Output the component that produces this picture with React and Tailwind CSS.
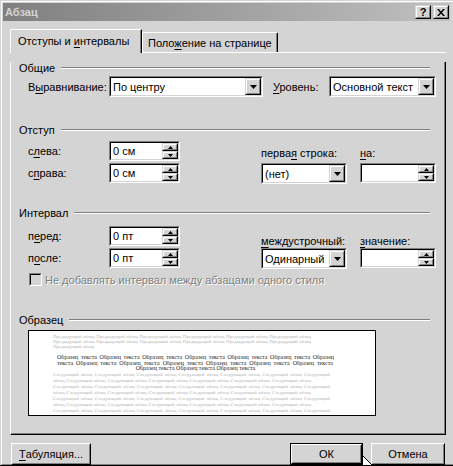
import React from "react";

const FONT = "font-[family-name:'Liberation_Sans',Arial,sans-serif]";

function U({ children }) {
  return <span className="underline decoration-1 underline-offset-[2px]">{children}</span>;
}

function Sunken({ className = "", inner = "bg-white", children }) {
  return (
    <div className={`border border-t-[#808080] border-l-[#808080] border-b-white border-r-white ${className}`}>
      <div className={`h-full w-full border border-t-black border-l-black border-b-[#d4d4d4] border-r-[#d4d4d4] flex items-center ${inner}`}>
        {children}
      </div>
    </div>
  );
}

function Bevel({ className = "", children }) {
  return (
    <div className={`border border-t-[#d4d4d4] border-l-[#d4d4d4] border-b-black border-r-black bg-[#d4d4d4] ${className}`}>
      <div className="h-full w-full border border-t-white border-l-white border-b-[#808080] border-r-[#808080] flex items-center justify-center">
        {children}
      </div>
    </div>
  );
}

function Combo({ w, value, className = "" }) {
  return (
    <Sunken className={`h-[21px] ${w} ${className}`}>
      <span className="flex-1 pl-[2px] whitespace-nowrap overflow-hidden leading-[14px]">{value}</span>
      <Bevel className="w-[16px] h-full shrink-0">
        <svg width="7" height="4" viewBox="0 0 7 4">
          <path d="M0 0h7L3.5 4z" fill="#000" />
        </svg>
      </Bevel>
    </Sunken>
  );
}

function Spin({ w, value, className = "" }) {
  return (
    <Sunken className={`h-[20px] ${w} ${className}`}>
      <span className="flex-1 pl-[2px] whitespace-nowrap overflow-hidden leading-[14px]">{value}</span>
      <div className="w-[16px] h-full flex flex-col shrink-0">
        <Bevel className="h-1/2 w-full">
          <svg width="5" height="3" viewBox="0 0 5 3">
            <path d="M2.5 0L5 3H0z" fill="#000" />
          </svg>
        </Bevel>
        <Bevel className="h-1/2 w-full">
          <svg width="5" height="3" viewBox="0 0 5 3">
            <path d="M0 0h5L2.5 3z" fill="#000" />
          </svg>
        </Bevel>
      </div>
    </Sunken>
  );
}

function Header({ label, className = "" }) {
  return (
    <div className={`flex items-center h-[12px] w-[411px] ${className}`}>
      <span className="leading-[12px] whitespace-nowrap">{label}</span>
      <div className="flex-1 ml-[6px] h-[2px] border-t border-t-[#808080] border-b border-b-white" />
    </div>
  );
}

function Row({ label, value }) {
  return (
    <div className="flex items-center h-[20px]">
      <span className="ml-[9px] w-[81px] whitespace-nowrap">{label}</span>
      <Spin w="w-[71px]" value={value} />
    </div>
  );
}

function PushButton({ className = "", children }) {
  return (
    <div className={`h-[22px] border border-t-white border-l-white border-b-black border-r-black ${className}`}>
      <div className="h-full w-full border border-t-[#d4d4d4] border-l-[#d4d4d4] border-b-[#808080] border-r-[#808080] flex items-center justify-center whitespace-nowrap">
        {children}
      </div>
    </div>
  );
}

const PREV = Array(6).fill("Предыдущий абзац").join(" ");
const DARK1 = Array(6).fill("Образец текста").join(" ") + " Образец";
const DARK2 = "текста " + Array(6).fill("Образец текста").join(" ");
const DARK3 = Array(3).fill("Образец текста").join(" ");
const NEXTA = Array(6).fill("Следующий абзац").join(" ") + " Следующий";
const NEXTB = "абзац " + Array(6).fill("Следующий абзац").join(" ");

const J = "text-justify [text-align-last:justify] overflow-hidden";

function Preview() {
  return (
    <div className="mt-[4px] ml-[9px] w-[348px] h-[86px] border border-black bg-white overflow-hidden font-[family-name:'Liberation_Serif',serif]">
      <div className="ml-[24px] pt-[3px] text-[5px] leading-[5px] text-[#b4b4b4]">
        <div className={`w-[258px] h-[5px] ${J}`}>{PREV}</div>
        <div className={`w-[258px] h-[5px] ${J}`}>{PREV}</div>
        <div className="h-[5px] whitespace-nowrap">Предыдущий абзац</div>
      </div>
      <div className="mt-[6px] ml-[28px] text-[6px] leading-[5.7px] text-[#2a2a2a]">
        <div className={`w-[277px] h-[5.7px] ${J}`}>{DARK1}</div>
        <div className={`w-[276px] h-[5.7px] ${J}`}>{DARK2}</div>
        <div className="w-[277px] h-[5.7px] text-center whitespace-nowrap">{DARK3}</div>
      </div>
      <div className="ml-[24px] text-[5px] leading-[6px] text-[#b4b4b4]">
        <div className={`w-[277px] h-[6px] ${J}`}>{NEXTA}</div>
        <div className={`w-[258px] h-[6px] ${J}`}>{NEXTB}</div>
        <div className={`w-[277px] h-[6px] ${J}`}>{NEXTA}</div>
        <div className={`w-[258px] h-[6px] ${J}`}>{NEXTB}</div>
        <div className={`w-[277px] h-[6px] ${J}`}>{NEXTA}</div>
        <div className={`w-[258px] h-[6px] ${J}`}>{NEXTB}</div>
        <div className={`w-[277px] h-[6px] ${J}`}>{NEXTA}</div>
      </div>
    </div>
  );
}

export default function App() {
  return (
    <div className={`relative w-[453px] h-[466px] overflow-hidden bg-[#d4d4d4] text-black text-[11px] leading-[14px] border-b border-b-black ${FONT}`}>
      <div className="ml-[1px] mt-[1px] h-[464px] border-t border-l border-white border-b border-b-[#808080] pl-[1px] pt-[1px]">
        {/* Title bar */}
        <div className="h-[18px] w-[447px] bg-linear-to-r from-[#808080] to-[#c0c0c0] flex items-center pl-[2px] pr-[1px]">
          <span className="flex-1 font-bold text-[#d4d4d4] leading-[14px]">Абзац</span>
          <Bevel className="w-[16px] h-[14px]">
            <span className="font-bold text-[11px] leading-[10px]">?</span>
          </Bevel>
          <Bevel className="w-[16px] h-[14px] ml-[2px]">
            <svg width="8" height="7" viewBox="0 0 8 7">
              <path d="M0 0h2l2 2.5L6 0h2L5 3.5 8 7H6L4 4.5 2 7H0l3-3.5z" fill="#000" />
            </svg>
          </Bevel>
        </div>

        {/* Tabs */}
        <div className="mt-[8px] ml-[7px] w-[436px] h-[24px] flex">
          <div className="w-[132px] h-[24px] border-l border-t border-white rounded-tl-[2px] border-r border-r-black shadow-[inset_-1px_0_#808080] pl-[7px] pt-[4px] whitespace-nowrap">
            Отступы и <U>и</U>нтервалы
          </div>
          <div className="flex-1 flex items-end border-b border-white">
            <div className="w-[136px] h-[20px] border-l border-t border-white rounded-tr-[2px] border-r border-r-black shadow-[inset_-1px_0_#808080] pl-[5px] pt-[3px] whitespace-nowrap">
              Поло<U>ж</U>ение на странице
            </div>
          </div>
        </div>

        {/* Panel */}
        <div className="ml-[7px] w-[436px] h-[373px] border-l border-white border-r border-b border-r-black border-b-black shadow-[inset_-1px_-1px_#808080] pl-[8px]">
          <Header label="Общие" className="mt-[9px]" />
          <div className="mt-[2px] flex items-center h-[21px]">
            <span className="ml-[9px] w-[81px] whitespace-nowrap">В<U>ы</U>равнивание:</span>
            <Combo w="w-[154px]" value="По центру" />
            <span className="ml-[10px] w-[56px] whitespace-nowrap"><U>У</U>ровень:</span>
            <Combo w="w-[107px]" value="Основной текст" />
          </div>

          <Header label="Отступ" className="mt-[27px]" />
          <div className="mt-[5px] flex items-start">
            <div className="flex flex-col gap-[2px]">
              <Row label={<>с<U>л</U>ева:</>} value="0 см" />
              <Row label={<>с<U>п</U>рава:</>} value="0 см" />
            </div>
            <div className="ml-[81px] pt-[5px]">
              <div className="whitespace-nowrap">перва<U>я</U> строка:</div>
              <Combo className="mt-[3px]" w="w-[86px]" value="(нет)" />
            </div>
            <div className="ml-[13px] pt-[5px]">
              <div className="whitespace-nowrap"><U>н</U>а:</div>
              <Spin className="mt-[3px]" w="w-[76px]" value="" />
            </div>
          </div>

          <Header label="Интервал" className="mt-[23px]" />
          <div className="mt-[7px] flex items-start">
            <div className="flex flex-col gap-[2px]">
              <Row label={<>п<U>е</U>ред:</>} value="0 пт" />
              <Row label={<>п<U>о</U>сле:</>} value="0 пт" />
            </div>
            <div className="ml-[81px] pt-[8px]">
              <div className="whitespace-nowrap"><U>м</U>еждустрочный:</div>
              <Combo w="w-[86px]" value="Одинарный" />
            </div>
            <div className="ml-[13px] pt-[8px]">
              <div className="whitespace-nowrap"><U>з</U>начение:</div>
              <Spin w="w-[76px]" value="" />
            </div>
          </div>

          <div className="mt-[4px] h-[13px] flex items-center">
            <Sunken className="ml-[10px] w-[13px] h-[13px]" inner="bg-[#d4d4d4]" />
            <span className="ml-[3px] text-[#808080] [text-shadow:1px_1px_0_#ffffff] whitespace-nowrap">
              Не добавлять интервал между абзацами одного стиля
            </span>
          </div>

          <Header label="Образец" className="mt-[28px]" />
          <Preview />
        </div>

        {/* Bottom buttons */}
        <div className="mt-[8px] ml-[8px] flex">
          <PushButton className="w-[80px]"><U>Т</U>абуляция...</PushButton>
          <div className="ml-[199px] w-[73px] h-[22px] border border-black">
            <div className="h-full w-full border border-t-white border-l-white border-b-black border-r-black">
              <div className="h-full w-full border border-t-[#d4d4d4] border-l-[#d4d4d4] border-b-[#808080] border-r-[#808080] flex items-center justify-center">
                ОК
              </div>
            </div>
          </div>
          <PushButton className="ml-[8px] w-[74px]">Отмена</PushButton>
        </div>
      </div>

      {/* mouse cursor */}
      <svg className="absolute left-[362px] top-[455px]" width="13" height="20" viewBox="0 0 13 20">
        <path d="M0.5 0.5V16.5L4.5 12.5L7.5 18.5L9.5 17.5L6.5 11.5H11.5Z" fill="#fff" stroke="#000" strokeWidth="1" />
      </svg>
    </div>
  );
}
